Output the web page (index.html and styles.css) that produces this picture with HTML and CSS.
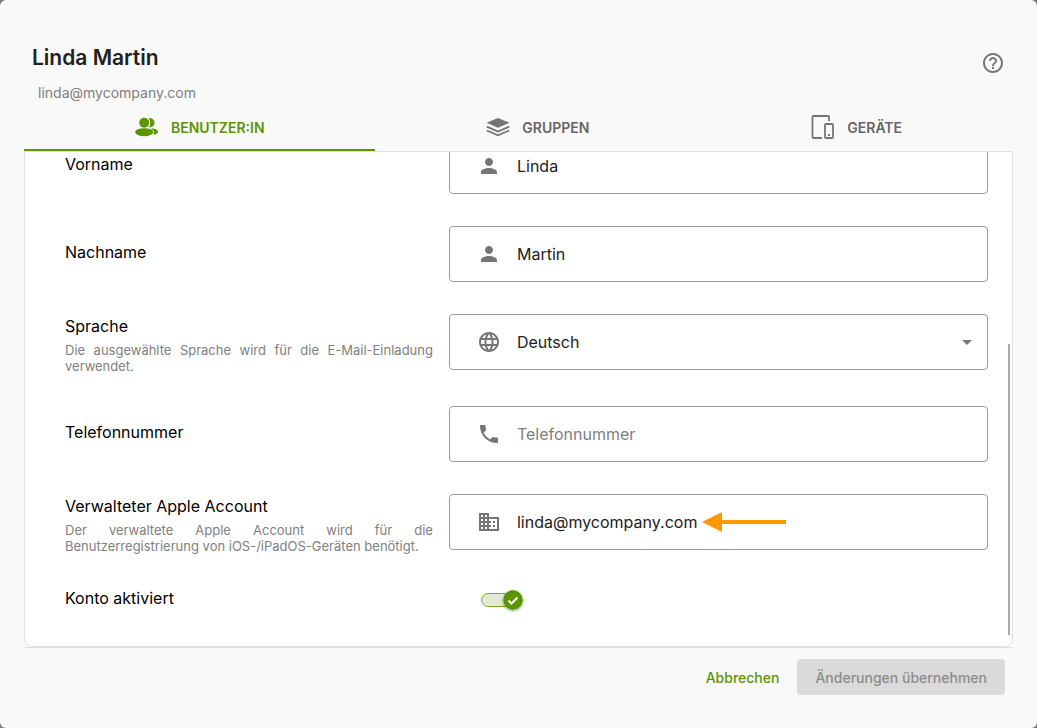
FILE: index.html
```html
<!DOCTYPE html>
<html lang="de">
  <head>
    <meta charset="UTF-8" />
    <meta name="viewport" content="width=device-width, initial-scale=1.0" />
    <title>Linda Martin</title>
    <link rel="stylesheet" href="styles.css">
  </head>
  <body>
    <main class="dialog">
      <header class="dialog-header">
        <div>
          <h1>Linda Martin</h1>
          <p class="email">linda@mycompany.com</p>
        </div>
        <button type="button" class="help" aria-label="Hilfe">
          <svg class="icon" viewBox="0 0 24 24"><path d="M11 18h2v-2h-2v2zm1-16C6.480 2 2 6.480 2 12s4.480 10 10 10 10-4.480 10-10S17.520 2 12 2zm0 18c-4.410 0-8-3.590-8-8s3.590-8 8-8 8 3.590 8 8-3.590 8-8 8zm0-14c-2.210 0-4 1.790-4 4h2c0-1.100.9-2 2-2s2 .9 2 2c0 2-3 1.750-3 5h2c0-2.250 3-2.500 3-5 0-2.210-1.790-4-4-4z"/></svg>
        </button>
      </header>

      <nav class="tabs" role="tablist">
        <button type="button" class="tab active" role="tab" aria-selected="true">
          <svg class="icon" viewBox="0 0 24 24">
            <circle cx="9.200" cy="7.800" r="5"/>
            <ellipse cx="9.200" cy="17.200" rx="9" ry="4"/>
            <path d="M13.600 3.300a4.600 4.600 0 1 1 .4 8.900c1.900-2.600 1.800-6.300-.4-8.900z"/>
            <path d="M15.400 13.500c4.600-.1 7.600 1.200 7.600 3.200 0 1.800-1.800 2.700-4.600 3 1.500-2.500.3-4.800-3-6.200z"/>
          </svg>
          BENUTZER:IN
        </button>
        <button type="button" class="tab" role="tab" aria-selected="false">
          <svg class="icon" viewBox="0 0 24 24">
            <path d="M12 3l11.500 4.800L12 12.800.500 7.800z"/>
            <path class="line" d="M.800 11.700L12 16.500l11.200-4.800M.800 15.500L12 20.300l11.200-4.800"/>
          </svg>
          GRUPPEN
        </button>
        <button type="button" class="tab" role="tab" aria-selected="false">
          <svg class="icon" viewBox="0 0 24 24">
            <path class="line" d="M18 6V2q0-1-1-1H2.500q-1 0-1 1v20q0 1 1 1H11"/>
            <rect class="line" x="14" y="9" width="8" height="14" rx="1"/>
            <rect x="17" y="19" width="2" height="2"/>
          </svg>
          GERÄTE
        </button>
      </nav>

      <section class="panel">
        <form class="form" id="userForm">
          <div class="row">
            <div class="info"><label for="firstName">Vorname</label></div>
            <div class="field">
              <svg class="icon" viewBox="0 0 24 24"><path d="M12 12c2.210 0 4-1.790 4-4s-1.790-4-4-4-4 1.790-4 4 1.790 4 4 4zm0 2c-2.670 0-8 1.340-8 4v2h16v-2c0-2.660-5.330-4-8-4z"/></svg>
              <input type="text" id="firstName" value="Linda" />
            </div>
          </div>

          <div class="row">
            <div class="info"><label for="lastName">Nachname</label></div>
            <div class="field">
              <svg class="icon" viewBox="0 0 24 24"><path d="M12 12c2.210 0 4-1.790 4-4s-1.790-4-4-4-4 1.790-4 4 1.790 4 4 4zm0 2c-2.670 0-8 1.340-8 4v2h16v-2c0-2.660-5.330-4-8-4z"/></svg>
              <input type="text" id="lastName" value="Martin" />
            </div>
          </div>

          <div class="row">
            <div class="info">
              <label for="language">Sprache</label>
              <p>Die ausgewählte Sprache wird für die E-Mail-Einladung verwendet.</p>
            </div>
            <div class="field">
              <svg class="icon" viewBox="0 0 24 24"><path d="M11.990 2C6.470 2 2 6.480 2 12s4.470 10 9.990 10C17.520 22 22 17.520 22 12S17.520 2 11.990 2zm6.930 6h-2.950c-.320-1.250-.780-2.450-1.380-3.560 1.840.630 3.370 1.910 4.330 3.560zM12 4.040c.830 1.200 1.480 2.530 1.910 3.960h-3.820c.430-1.430 1.080-2.760 1.910-3.960zM4.260 14C4.100 13.360 4 12.690 4 12s.1-1.360.260-2h3.380c-.080.660-.140 1.320-.140 2s.060 1.340.140 2H4.260zm.820 2h2.950c.320 1.250.780 2.450 1.380 3.560-1.840-.630-3.370-1.900-4.330-3.560zm2.950-8H5.080c.960-1.660 2.490-2.930 4.330-3.560C8.810 5.550 8.350 6.750 8.030 8zM12 19.960c-.830-1.200-1.480-2.530-1.910-3.960h3.820c-.430 1.430-1.080 2.760-1.910 3.960zM14.340 14H9.660c-.090-.660-.160-1.320-.160-2s.070-1.350.160-2h4.680c.090.650.160 1.320.160 2s-.070 1.340-.160 2zm.250 5.560c.6-1.110 1.060-2.310 1.380-3.560h2.950c-.960 1.650-2.490 2.930-4.330 3.560zM16.360 14c.080-.660.140-1.320.140-2s-.060-1.340-.140-2h3.380c.160.640.260 1.310.260 2s-.1 1.360-.260 2h-3.380z"/></svg>
              <select id="language">
                <option selected>Deutsch</option>
                <option>English</option>
              </select>
              <svg class="icon" viewBox="0 0 24 24"><path d="M7 10l5 5 5-5z"/></svg>
            </div>
          </div>

          <div class="row">
            <div class="info"><label for="phone">Telefonnummer</label></div>
            <div class="field">
              <svg class="icon" viewBox="0 0 24 24"><path d="M6.620 10.790c1.440 2.830 3.760 5.140 6.590 6.590l2.200-2.200c.270-.270.670-.360 1.020-.240 1.120.370 2.330.570 3.570.570.550 0 1 .450 1 1V20c0 .550-.450 1-1 1-9.390 0-17-7.610-17-17 0-.550.450-1 1-1h3.500c.550 0 1 .450 1 1 0 1.250.2 2.450.570 3.570.110.350.030.740-.250 1.020l-2.200 2.200z"/></svg>
              <input type="tel" id="phone" placeholder="Telefonnummer" />
            </div>
          </div>

          <div class="row">
            <div class="info">
              <label for="appleAccount">Verwalteter Apple Account</label>
              <p>Der verwaltete Apple Account wird für die Benutzerregistrierung von iOS-/iPadOS-Geräten benötigt.</p>
            </div>
            <div class="field">
              <svg class="icon" viewBox="0 0 24 24"><path d="M12 7V3H2v18h20V7H12zM6 19H4v-2h2v2zm0-4H4v-2h2v2zm0-4H4V9h2v2zm0-4H4V5h2v2zm4 12H8v-2h2v2zm0-4H8v-2h2v2zm0-4H8V9h2v2zm0-4H8V5h2v2zm10 12h-8v-2h2v-2h-2v-2h2v-2h-2V9h8v10zm-2-8h-2v2h2v-2zm0 4h-2v2h2v-2z"/></svg>
              <input type="text" id="appleAccount" value="linda@mycompany.com" />
              <svg class="arrow" viewBox="0 0 84 20"><path d="M0 10L20 0v8h64v4H20v8z"/></svg>
            </div>
          </div>

          <div class="row">
            <div class="info"><label for="active">Konto aktiviert</label></div>
            <div class="switch">
              <input type="checkbox" id="active" checked />
              <svg class="thumb" viewBox="0 0 20 20"><circle cx="10" cy="10" r="10"/><path d="M5.500 10.500l3 3 6-6"/></svg>
            </div>
          </div>
        </form>
        <div class="scroll-thumb"></div>
      </section>

      <footer class="dialog-footer">
        <button type="button" class="btn btn-text">Abbrechen</button>
        <button type="submit" form="userForm" class="btn btn-save" disabled>Änderungen übernehmen</button>
      </footer>
    </main>
  </body>
</html>
```
FILE: styles.css
```css
* {
  box-sizing: border-box;
}

body {
  margin: 0;
  background-color: #777;
  color: #212121;
  font-family: Inter, Roboto, sans-serif;
  font-size: 16px;
}

h1,
p {
  margin: 0;
}

button,
input,
select {
  font-family: inherit;
}

.dialog {
  display: flex;
  flex-direction: column;
  height: 100vh;
  padding: 0 24px;
  border-radius: 6px;
  background-color: #f9f9f9;
}

.icon {
  width: 24px;
  height: 24px;
  flex: none;
  fill: #757575;
}

/* Header */
.dialog-header {
  display: flex;
  justify-content: space-between;
  align-items: flex-start;
  padding: 42px 8px 0;
}

h1 {
  font-size: 21px;
  font-weight: 600;
  line-height: 32px;
}

.email {
  margin-top: 9px;
  padding-left: 6px;
  color: #808080;
  font-size: 14px;
  line-height: 20px;
}

.help {
  display: flex;
  margin-top: 9px;
  padding: 0;
  border: none;
  background: none;
  cursor: pointer;
}

/* Tabs */
.tabs {
  display: flex;
}

.tab {
  display: flex;
  flex: 1 1 auto;
  align-items: center;
  justify-content: center;
  gap: 12px;
  height: 48px;
  padding: 2px 0 0;
  border: none;
  border-bottom: 2px solid transparent;
  background: none;
  color: #666;
  font-size: 14px;
  font-weight: 600;
  cursor: pointer;
}

.tab.active {
  border-bottom-color: #5b9500;
  color: #5b9500;
}

.tab.active .icon {
  fill: #5b9500;
}

.tab .line {
  fill: none;
  stroke: #757575;
  stroke-width: 1.8;
}

/* Panel, scrolled to the end of the form */
.panel {
  position: relative;
  display: flex;
  flex: 1;
  flex-direction: column;
  justify-content: flex-end;
  min-height: 0;
  overflow: hidden;
  border: 1px solid #e0e0e0;
  border-radius: 0 0 8px 8px;
  background-color: #fff;
}

.form {
  display: flex;
  flex-direction: column;
  gap: 32px;
  padding: 0 24px 32px 40px;
}

.row {
  display: grid;
  grid-template-columns: 41.6% 1fr;
}

.info {
  align-self: center;
  padding-right: 16px;
}

.info label {
  display: block;
  margin-bottom: 4px;
  color: #000;
  line-height: 24px;
}

.info p {
  color: #808080;
  font-size: 13px;
  line-height: 16px;
  text-align: justify;
}

.field {
  position: relative;
  display: flex;
  align-items: center;
  gap: 16px;
  height: 56px;
  padding: 0 8px 0 27px;
  border: 1px solid #999;
  border-radius: 4px;
}

.field input,
.field select {
  flex: 1;
  min-width: 0;
  height: 100%;
  padding: 0;
  border: none;
  outline: none;
  appearance: none;
  background: none;
  color: #212121;
  font-size: 16px;
}

.field input::placeholder {
  color: #808080;
}

.arrow {
  position: absolute;
  left: 252px;
  width: 84px;
  height: 20px;
  fill: #ff9800;
}

.switch {
  position: relative;
  display: flex;
  align-items: center;
  padding-left: 32px;
}

.switch input {
  width: 38px;
  height: 14px;
  margin: 0;
  border: 1px solid #7cab33;
  border-radius: 7px;
  appearance: none;
  background-color: #e1ebd2;
}

.thumb {
  position: absolute;
  left: 54px;
  width: 20px;
  height: 20px;
  border-radius: 50%;
  box-shadow: 0 1px 3px rgba(0, 0, 0, 0.4);
  fill: #5b9500;
  pointer-events: none;
}

.thumb path {
  fill: none;
  stroke: #fff;
  stroke-width: 2;
}

.scroll-thumb {
  position: absolute;
  right: 2px;
  bottom: 11px;
  width: 2px;
  height: 59%;
  background-color: #aaa;
}

/* Footer */
.dialog-footer {
  display: flex;
  justify-content: flex-end;
  padding: 11px 8px 33px;
  border-top: 1px solid #e0e0e0;
}

.btn {
  height: 36px;
  padding: 0 18px;
  border: none;
  border-radius: 4px;
  font-size: 14px;
  font-weight: 500;
}

.btn-text {
  background: none;
  color: #5b9500;
  cursor: pointer;
}

.btn-save {
  background-color: #dadada;
  color: #8c8c8c;
}
```
